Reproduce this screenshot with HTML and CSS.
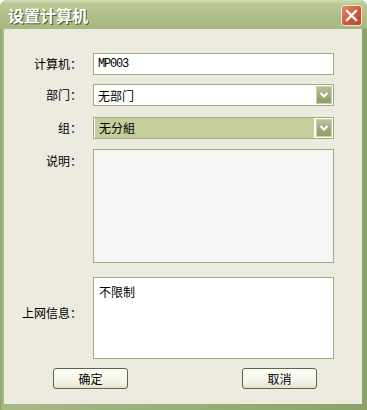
FILE: index.html
```html
<!DOCTYPE html>
<html lang="zh">
<head>
  <meta charset="UTF-8">
  <title>设置计算机</title>
  <link rel="stylesheet" href="styles.css">
</head>
<body>

<div class="window">
  <div class="titlebar">
    <span class="title">设置计算机</span>
    <span class="close">
      <svg width="13" height="13" viewBox="0 0 13 13"><path d="M2 2 L11 11 M11 2 L2 11" stroke="#fff" stroke-width="2.4" stroke-linecap="square"/></svg>
    </span>
  </div>

  <div class="client">
    <div class="row r1">
      <label class="lbl">计算机：</label>
      <div class="field"><span class="mono">MP003</span></div>
    </div>
    <div class="row r2">
      <label class="lbl">部门：</label>
      <div class="field combo">
        <span class="value">无部门</span>
        <span class="drop"><svg width="10" height="8" viewBox="0 0 10 8"><path d="M1.5 2 L5 5.5 L8.5 2" fill="none" stroke="#fff" stroke-width="2"/></svg></span>
      </div>
    </div>
    <div class="row r3">
      <label class="lbl">组：</label>
      <div class="field combo selected">
        <span class="value">无分組</span>
        <span class="drop"><svg width="10" height="8" viewBox="0 0 10 8"><path d="M1.5 2 L5 5.5 L8.5 2" fill="none" stroke="#fff" stroke-width="2"/></svg></span>
      </div>
    </div>
    <div class="row r4">
      <label class="lbl top">说明：</label>
      <div class="field memo readonly"></div>
    </div>
    <div class="row r5">
      <label class="lbl mid">上网信息：</label>
      <div class="field memo net">不限制</div>
    </div>
    <div class="buttons">
      <button class="btn">确定</button>
      <button class="btn">取消</button>
    </div>
  </div>
</div>

</body>
</html>
```

FILE: styles.css
```css
body {
  margin: 0;
  font-family: "Noto Sans CJK SC", "Liberation Sans", sans-serif;
  font-size: 12px;
  color: #000;
}
.window {
  width: 367px;
  height: 410px;
  display: flex;
  flex-direction: column;
  background: linear-gradient(90deg, #8ba36a, #a7b986 3px, #8ba36a);
  border-radius: 7px 7px 0 0;
  overflow: hidden;
}
.titlebar {
  height: 29px;
  display: flex;
  align-items: center;
  justify-content: space-between;
  padding: 0 5px 0 8px;
  background: linear-gradient(#d3ddb4, #bac894 4px, #afbe89 60%, #a6b77f);
}
.title {
  color: #fff;
  font-size: 16px;
  font-weight: bold;
  text-shadow: 1px 1px 0 #4c5a33;
}
.close {
  width: 19px;
  height: 19px;
  margin-top: 2px;
  display: flex;
  align-items: center;
  justify-content: center;
  border: 1px solid #f3e8dc;
  border-radius: 3px;
  background: linear-gradient(135deg, #e9896a, #d0573a 55%, #b9432a);
}
.client {
  flex: 1;
  margin: 0 5px 6px 4px;
  background: #edeae0;
  padding-top: 24px;
}
.row {
  display: flex;
  align-items: center;
}
.r2 { margin-top: 9px; }
.r3 { margin-top: 11px; }
.r4 { margin-top: 10px; align-items: flex-start; }
.r5 { margin-top: 14px; }
.lbl {
  width: 78px;
  padding-right: 11px;
  text-align: right;
  line-height: 14px;
}
.lbl.top { padding-top: 5px; }
.lbl.mid { margin-bottom: 10px; }
.field {
  box-sizing: border-box;
  width: 241px;
  height: 22px;
  border: 1px solid #a0ab80;
  background: #fff;
  padding: 0 4px;
  display: flex;
  align-items: center;
}
.mono {
  font-family: "Liberation Mono", monospace;
  font-size: 12px;
  letter-spacing: -1.2px;
}
.combo {
  justify-content: space-between;
  padding-right: 1px;
}
.combo.selected {
  padding-left: 2px;
}
.combo.selected .value {
  background: #c6cf9b;
  flex: 1;
  margin: -1px 2px -1px -1px;
  padding: 2px 4px;
  height: 16px;
  line-height: 16px;
}
.drop {
  width: 16px;
  height: 18px;
  display: flex;
  align-items: center;
  justify-content: center;
  border-radius: 1px;
  background: linear-gradient(#b9c49b, #98a573 70%, #8d9a68);
  box-shadow: inset 0 0 0 1px #c9d1af;
}
.memo {
  align-items: flex-start;
  padding: 5px 5px;
}
.r4 .memo {
  height: 114px;
}
.readonly {
  background: #f6f6f5;
}
.net {
  height: 82px;
}
.buttons {
  margin-top: 9px;
  display: flex;
  padding-left: 49px;
  gap: 114px;
}
.btn {
  width: 75px;
  height: 21px;
  padding: 0;
  font: inherit;
  border: 1px solid #5a6843;
  border-radius: 3px;
  background: linear-gradient(#fffffa, #f5f3e6 70%, #e4e0cc);
}
```
